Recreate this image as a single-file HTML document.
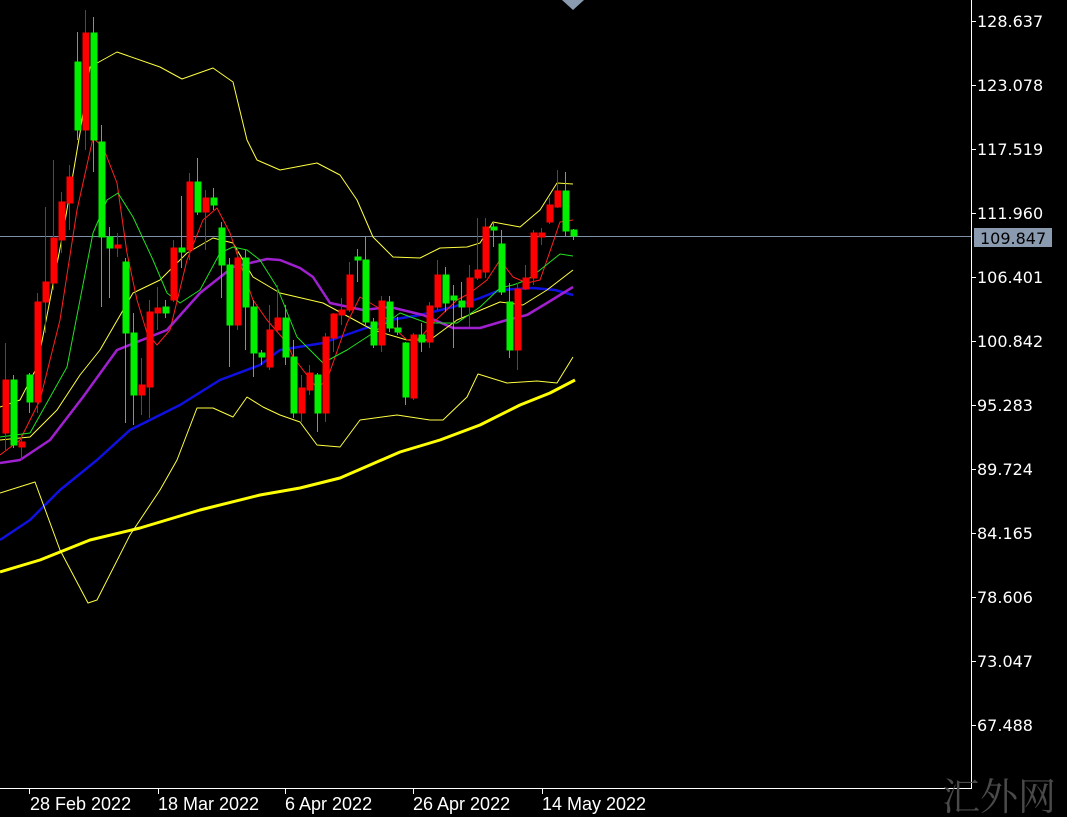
<!DOCTYPE html>
<html><head><meta charset="utf-8"><style>
html,body{margin:0;padding:0;background:#000;}
body{width:1067px;height:817px;overflow:hidden;position:relative;}
svg{position:absolute;left:0;top:0;}
.p{font-family:"DejaVu Sans",sans-serif;font-size:16px;fill:#fff;}
.d{font-family:"Liberation Sans",sans-serif;font-size:18px;fill:#fff;}
</style></head><body>
<svg width="1067" height="817" viewBox="0 0 1067 817">
<rect width="1067" height="817" fill="#000"/>
<line x1="0" y1="236.5" x2="971" y2="236.5" stroke="#8090a8" stroke-width="1"/>
<polygon points="562,0 584,0 573,10" fill="#8a9bb0"/>
<!-- lines -->
<g fill="none" stroke-linejoin="round">
<polyline stroke="#ffff00" stroke-width="3" points="0,572 40,560 90,540 140,528 200,510 260,495 300,488 340,478 370,465 400,452 440,440 480,425 520,405 550,393 575,380"/>
<polyline stroke="#1010e0" stroke-width="2.5" points="0,540 30,520 60,490 97,460 130,430 180,405 220,380 260,365 280,350 323,343 360,330 390,320 420,315 453,307 480,298 500,290 533,288 555,290 573,295"/>
<polyline stroke="#a020d0" stroke-width="2.5" points="0,463 20,460 50,440 83,397 117,350 167,330 200,293 233,267 267,259 280,260 300,268 313,277 330,303 363,310 390,307 423,315 453,328 480,328 507,320 527,315 547,303 573,287"/>
<polyline stroke="#ffff40" stroke-width="1" points="0,407 20,400 37,367 63,233 80,133 90,67 117,52 160,67 182,79 213,68 233,82 247,140 257,160 280,170 317,163 340,175 357,200 373,237 393,257 420,258 440,248 467,247 480,243 493,222 520,227 540,210 557,183 573,184"/>
<polyline stroke="#ffff40" stroke-width="1" points="0,440 30,437 57,410 80,375 100,350 133,293 160,280 187,253 213,238 233,243 253,277 280,293 323,303 373,330 407,340 430,340 457,320 500,302 523,305 547,290 573,270"/>
<polyline stroke="#ffff40" stroke-width="1" points="0,493 35,482 60,550 88,603 97,600 130,535 160,490 177,460 197,408 213,408 233,417 247,397 263,407 280,415 300,422 317,445 340,447 360,420 397,415 430,420 443,420 467,397 478,374 507,383 537,381 557,383 573,357"/>
<polyline stroke="#ff2020" stroke-width="1" points="0,455 20,440 40,400 60,320 77,210 93,138 103,147 117,183 127,253 137,300 147,333 157,345 170,330 187,260 203,220 217,208 230,233 240,263 253,300 267,320 287,343 293,357 317,388 327,380 347,323 360,297 377,307 393,327 407,340 420,338 433,323 457,300 470,293 487,280 500,260 513,277 527,283 540,280 547,260 560,222 573,220"/>
<polyline stroke="#20e020" stroke-width="1" points="0,437 30,433 67,367 93,233 107,200 118,193 133,217 153,260 167,293 180,303 200,290 220,253 233,247 247,250 260,260 277,287 297,337 323,363 347,350 370,335 400,313 427,323 457,323 480,307 500,288 513,285 527,280 540,270 560,254 573,256"/>
</g>
<!-- candles -->
<g id="c" stroke-width="1">
<g stroke="#ff0000" fill="#ff0000">
<line x1="5.5" y1="343" x2="5.5" y2="450"/><rect x="3" y="380" width="6" height="53"/>
<line x1="21.5" y1="435" x2="21.5" y2="460"/><rect x="19" y="442" width="6" height="5"/>
<line x1="37.5" y1="293" x2="37.5" y2="413"/><rect x="35" y="302" width="6" height="100"/>
<line x1="45.5" y1="207" x2="45.5" y2="333"/><rect x="43" y="282" width="6" height="20"/>
<line x1="53.5" y1="160" x2="53.5" y2="290"/><rect x="51" y="238" width="6" height="45"/>
<line x1="61.5" y1="192" x2="61.5" y2="253"/><rect x="59" y="202" width="6" height="38"/>
<line x1="69.5" y1="165" x2="69.5" y2="230"/><rect x="67" y="177" width="6" height="26"/>
<line x1="85.5" y1="10" x2="85.5" y2="150"/><rect x="83" y="33" width="6" height="97"/>
<line x1="117.5" y1="233" x2="117.5" y2="257"/><rect x="115" y="245" width="6" height="3"/>
<line x1="141.5" y1="358" x2="141.5" y2="415"/><rect x="139" y="385" width="6" height="10"/>
<line x1="149.5" y1="300" x2="149.5" y2="418"/><rect x="147" y="312" width="6" height="75"/>
<line x1="157.5" y1="287" x2="157.5" y2="330"/><rect x="155" y="308" width="6" height="5"/>
<line x1="173.5" y1="240" x2="173.5" y2="302"/><rect x="171" y="248" width="6" height="52"/>
<line x1="189.5" y1="173" x2="189.5" y2="260"/><rect x="187" y="182" width="6" height="68"/>
<line x1="205.5" y1="190" x2="205.5" y2="250"/><rect x="203" y="198" width="6" height="14"/>
<line x1="237.5" y1="250" x2="237.5" y2="330"/><rect x="235" y="258" width="6" height="67"/>
<line x1="269.5" y1="305" x2="269.5" y2="370"/><rect x="267" y="330" width="6" height="37"/>
<line x1="277.5" y1="285" x2="277.5" y2="333"/><rect x="275" y="318" width="6" height="12"/>
<line x1="301.5" y1="375" x2="301.5" y2="422"/><rect x="299" y="388" width="6" height="25"/>
<line x1="309.5" y1="365" x2="309.5" y2="395"/><rect x="307" y="373" width="6" height="17"/>
<line x1="325.5" y1="333" x2="325.5" y2="422"/><rect x="323" y="337" width="6" height="76"/>
<line x1="333.5" y1="313" x2="333.5" y2="352"/><rect x="331" y="314" width="6" height="24"/>
<line x1="341.5" y1="298" x2="341.5" y2="325"/><rect x="339" y="310" width="6" height="5"/>
<line x1="349.5" y1="262" x2="349.5" y2="312"/><rect x="347" y="275" width="6" height="35"/>
<line x1="381.5" y1="296" x2="381.5" y2="352"/><rect x="379" y="301" width="6" height="44"/>
<line x1="413.5" y1="333" x2="413.5" y2="400"/><rect x="411" y="335" width="6" height="63"/>
<line x1="429.5" y1="302" x2="429.5" y2="348"/><rect x="427" y="306" width="6" height="36"/>
<line x1="437.5" y1="260" x2="437.5" y2="310"/><rect x="435" y="275" width="6" height="32"/>
<line x1="469.5" y1="265" x2="469.5" y2="327"/><rect x="467" y="278" width="6" height="29"/>
<line x1="477.5" y1="218" x2="477.5" y2="280"/><rect x="475" y="270" width="6" height="8"/>
<line x1="485.5" y1="218" x2="485.5" y2="278"/><rect x="483" y="227" width="6" height="45"/>
<line x1="517.5" y1="283" x2="517.5" y2="370"/><rect x="515" y="289" width="6" height="61"/>
<line x1="525.5" y1="265" x2="525.5" y2="290"/><rect x="523" y="278" width="6" height="11"/>
<line x1="533.5" y1="230" x2="533.5" y2="285"/><rect x="531" y="233" width="6" height="45"/>
<line x1="541.5" y1="228" x2="541.5" y2="245"/><rect x="539" y="233" width="6" height="4"/>
<line x1="549.5" y1="198" x2="549.5" y2="224"/><rect x="547" y="205" width="6" height="17"/>
<line x1="557.5" y1="170" x2="557.5" y2="208"/><rect x="555" y="191" width="6" height="16"/>
</g>
<g stroke="#00f000" fill="#00f000">
<line x1="13.5" y1="375" x2="13.5" y2="448"/><rect x="11" y="380" width="6" height="65"/>
<line x1="29.5" y1="373" x2="29.5" y2="413"/><rect x="27" y="375" width="6" height="27"/>
<line x1="77.5" y1="32" x2="77.5" y2="140"/><rect x="75" y="62" width="6" height="68"/>
<line x1="93.5" y1="17" x2="93.5" y2="172"/><rect x="91" y="33" width="6" height="107"/>
<line x1="101.5" y1="125" x2="101.5" y2="307"/><rect x="99" y="142" width="6" height="95"/>
<line x1="109.5" y1="227" x2="109.5" y2="298"/><rect x="107" y="237" width="6" height="11"/>
<line x1="125.5" y1="258" x2="125.5" y2="423"/><rect x="123" y="262" width="6" height="71"/>
<line x1="133.5" y1="313" x2="133.5" y2="425"/><rect x="131" y="333" width="6" height="62"/>
<line x1="165.5" y1="300" x2="165.5" y2="318"/><rect x="163" y="307" width="6" height="6"/>
<line x1="181.5" y1="196" x2="181.5" y2="268"/><rect x="179" y="248" width="6" height="4"/>
<line x1="197.5" y1="158" x2="197.5" y2="215"/><rect x="195" y="182" width="6" height="30"/>
<line x1="213.5" y1="188" x2="213.5" y2="210"/><rect x="211" y="198" width="6" height="7"/>
<line x1="221.5" y1="222" x2="221.5" y2="298"/><rect x="219" y="228" width="6" height="37"/>
<line x1="229.5" y1="258" x2="229.5" y2="367"/><rect x="227" y="265" width="6" height="60"/>
<line x1="245.5" y1="250" x2="245.5" y2="350"/><rect x="243" y="258" width="6" height="49"/>
<line x1="253.5" y1="300" x2="253.5" y2="377"/><rect x="251" y="307" width="6" height="46"/>
<line x1="261.5" y1="350" x2="261.5" y2="365"/><rect x="259" y="353" width="6" height="4"/>
<line x1="285.5" y1="305" x2="285.5" y2="365"/><rect x="283" y="318" width="6" height="39"/>
<line x1="293.5" y1="340" x2="293.5" y2="418"/><rect x="291" y="357" width="6" height="56"/>
<line x1="317.5" y1="373" x2="317.5" y2="432"/><rect x="315" y="375" width="6" height="38"/>
<line x1="357.5" y1="249" x2="357.5" y2="282"/><rect x="355" y="257" width="6" height="3"/>
<line x1="365.5" y1="237" x2="365.5" y2="325"/><rect x="363" y="260" width="6" height="62"/>
<line x1="373.5" y1="318" x2="373.5" y2="348"/><rect x="371" y="322" width="6" height="23"/>
<line x1="389.5" y1="296" x2="389.5" y2="332"/><rect x="387" y="302" width="6" height="26"/>
<line x1="397.5" y1="317" x2="397.5" y2="335"/><rect x="395" y="328" width="6" height="4"/>
<line x1="405.5" y1="342" x2="405.5" y2="405"/><rect x="403" y="343" width="6" height="54"/>
<line x1="421.5" y1="323" x2="421.5" y2="352"/><rect x="419" y="335" width="6" height="7"/>
<line x1="445.5" y1="267" x2="445.5" y2="312"/><rect x="443" y="275" width="6" height="28"/>
<line x1="453.5" y1="285" x2="453.5" y2="348"/><rect x="451" y="296" width="6" height="4"/>
<line x1="461.5" y1="282" x2="461.5" y2="320"/><rect x="459" y="301" width="6" height="6"/>
<line x1="493.5" y1="222" x2="493.5" y2="247"/><rect x="491" y="227" width="6" height="3"/>
<line x1="501.5" y1="230" x2="501.5" y2="295"/><rect x="499" y="244" width="6" height="48"/>
<line x1="509.5" y1="283" x2="509.5" y2="358"/><rect x="507" y="302" width="6" height="48"/>
<line x1="565.5" y1="172" x2="565.5" y2="237"/><rect x="563" y="191" width="6" height="40"/>
<line x1="573.5" y1="229" x2="573.5" y2="240"/><rect x="571" y="230" width="6" height="6"/>
</g>
</g>
<!-- axes -->
<line x1="971.5" y1="0" x2="971.5" y2="789" stroke="#fff"/>
<line x1="0" y1="788.5" x2="972" y2="788.5" stroke="#fff"/>
<g stroke="#fff">
<line x1="971" y1="21.5" x2="976" y2="21.5"/><line x1="971" y1="85.5" x2="976" y2="85.5"/>
<line x1="971" y1="149.5" x2="976" y2="149.5"/><line x1="971" y1="213.5" x2="976" y2="213.5"/>
<line x1="971" y1="277.5" x2="976" y2="277.5"/><line x1="971" y1="341.5" x2="976" y2="341.5"/>
<line x1="971" y1="405.5" x2="976" y2="405.5"/><line x1="971" y1="469.5" x2="976" y2="469.5"/>
<line x1="971" y1="533.5" x2="976" y2="533.5"/><line x1="971" y1="597.5" x2="976" y2="597.5"/>
<line x1="971" y1="661.5" x2="976" y2="661.5"/><line x1="971" y1="725.5" x2="976" y2="725.5"/>
<line x1="29.5" y1="789" x2="29.5" y2="794"/><line x1="158.5" y1="789" x2="158.5" y2="794"/>
<line x1="285.5" y1="789" x2="285.5" y2="794"/><line x1="413.5" y1="789" x2="413.5" y2="794"/>
<line x1="542.5" y1="789" x2="542.5" y2="794"/>
</g>
<g class="p">
<text x="977" y="27">128.637</text><text x="977" y="91">123.078</text>
<text x="977" y="155">117.519</text><text x="977" y="219">111.960</text>
<text x="977" y="283">106.401</text><text x="977" y="347">100.842</text>
<text x="977" y="411">95.283</text><text x="977" y="475">89.724</text>
<text x="977" y="539">84.165</text><text x="977" y="603">78.606</text>
<text x="977" y="667">73.047</text><text x="977" y="731">67.488</text>
</g>
<rect x="974" y="145" width="78" height="0" fill="none"/>
<rect x="974" y="228" width="78" height="19" fill="#8a9bb0"/>
<text x="980" y="244" class="p" style="fill:#000">109.847</text>
<g class="d">
<text x="30" y="810">28 Feb 2022</text>
<text x="158" y="810">18 Mar 2022</text>
<text x="285" y="810">6 Apr 2022</text>
<text x="413" y="810">26 Apr 2022</text>
<text x="542" y="810">14 May 2022</text>
</g>
<text x="942" y="810" style="font-family:'Noto Serif CJK SC','WenQuanYi Zen Hei',serif;font-size:38px;fill:#4a4a4a">汇外网</text>
</svg>
</body></html>
